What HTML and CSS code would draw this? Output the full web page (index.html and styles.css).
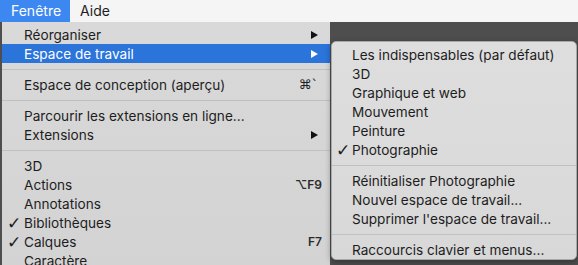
FILE: index.html
```html
<!DOCTYPE html>
<html lang="fr">
<head>
  <meta charset="UTF-8">
  <title>Menu Fenêtre</title>
  <link rel="stylesheet" href="styles.css">
</head>
<body>

  <div class="menubar">
    <span class="menubar-item active">Fenêtre</span>
    <span class="menubar-item">Aide</span>
  </div>

  <div class="workspace">
    <div class="menu main-menu">
      <div class="item"><span class="label">Réorganiser</span><span class="arrow"></span></div>
      <div class="item selected"><span class="label">Espace de travail</span><span class="arrow"></span></div>
      <div class="sep"></div>
      <div class="item"><span class="label">Espace de conception (aperçu)</span><span class="key">⌘`</span></div>
      <div class="sep"></div>
      <div class="item"><span class="label">Parcourir les extensions en ligne...</span></div>
      <div class="item"><span class="label">Extensions</span><span class="arrow"></span></div>
      <div class="sep"></div>
      <div class="item"><span class="label">3D</span></div>
      <div class="item"><span class="label">Actions</span><span class="key small">⌥F9</span></div>
      <div class="item"><span class="label">Annotations</span></div>
      <div class="item"><span class="check">✓</span><span class="label">Bibliothèques</span></div>
      <div class="item"><span class="check">✓</span><span class="label">Calques</span><span class="key small">F7</span></div>
      <div class="item"><span class="label">Caractère</span></div>
    </div>

    <!-- submenu of "Espace de travail" -->
    <div class="menu sub-menu">
      <div class="item"><span class="label">Les indispensables (par défaut)</span></div>
      <div class="item"><span class="label">3D</span></div>
      <div class="item"><span class="label">Graphique et web</span></div>
      <div class="item"><span class="label">Mouvement</span></div>
      <div class="item"><span class="label">Peinture</span></div>
      <div class="item"><span class="check">✓</span><span class="label">Photographie</span></div>
      <div class="sep"></div>
      <div class="item"><span class="label">Réinitialiser Photographie</span></div>
      <div class="item"><span class="label">Nouvel espace de travail...</span></div>
      <div class="item"><span class="label">Supprimer l'espace de travail...</span></div>
      <div class="sep"></div>
      <div class="item"><span class="label">Raccourcis clavier et menus...</span></div>
    </div>
  </div>

</body>
</html>
```

FILE: styles.css
```css
body {
  margin: 0;
  padding: 0;
  width: 578px;
  height: 265px;
  overflow: hidden;
  font-family: Inter, 'Liberation Sans', Arial, sans-serif;
  font-size: 13.6px;
  color: #1d1d1d;
  background-color: #4e4e4e;
}

.menubar {
  display: flex;
  height: 22px;
  line-height: 22px;
  font-size: 14px;
  background-color: #f5f5f5;
}

.menubar-item {
  padding: 0 10px;
}

.menubar-item.active {
  padding-left: 11px;
  width: 49px;
  background-color: #3c88f0;
  color: white;
}

.workspace {
  position: relative;
  height: 243px;
  padding-left: 2px;
}

.menu {
  display: flex;
  flex-direction: column;
}

.main-menu {
  width: 328px;
  height: 100%;
  padding-top: 3px;
  box-sizing: border-box;
  background: linear-gradient(#d9d9d9, #d3d3d3);
}

.item {
  position: relative;
  display: flex;
  align-items: center;
  flex-shrink: 0;
  height: 19px;
  padding: 0 8px 0 22px;
}

.item .label {
  flex: 1;
  white-space: nowrap;
}

.item.selected {
  background-color: #2b74da;
  color: white;
}

.check {
  position: absolute;
  left: 5px;
  font-family: 'DejaVu Sans', sans-serif;
  font-size: 17px;
}

.key {
  font-family: 'DejaVu Sans', sans-serif;
  font-size: 13px;
  margin-right: 4px;
}

.key.small {
  font-family: Inter, 'Liberation Sans', Arial, sans-serif;
  font-size: 12px;
  font-weight: 600;
  color: #2a2a2a;
  margin-right: 0;
}

.arrow {
  width: 0;
  height: 0;
  margin-right: 4px;
  border-left: 7px solid #111;
  border-top: 4.5px solid transparent;
  border-bottom: 4.5px solid transparent;
}

.selected .arrow {
  border-left-color: white;
}

.sep {
  flex-shrink: 0;
  height: 1px;
  margin: 6px 0 5px;
  background-color: #c0c0c0;
}

.sub-menu {
  position: absolute;
  top: 19px;
  left: 331px;
  width: 246px;
  padding-top: 3px;
  box-sizing: border-box;
  border: 1px solid #a9a9a9;
  border-radius: 5px;
  background: linear-gradient(#dedede, #d8d8d8);
  box-shadow: 0 2px 6px rgba(0, 0, 0, 0.35);
}

.sub-menu .item {
  padding-left: 20px;
}

.sub-menu .check {
  left: 4px;
}
```
